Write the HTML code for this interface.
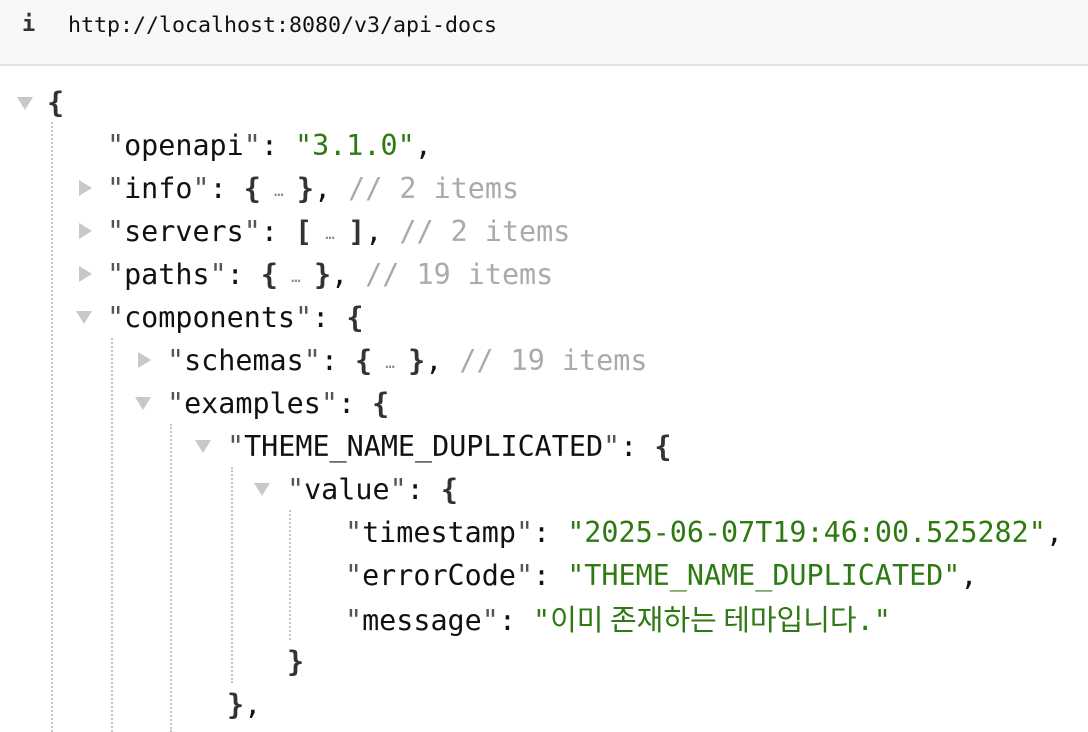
<!DOCTYPE html>
<html><head><meta charset="utf-8"><style>
html,body{margin:0;padding:0;background:#fff;width:1088px;height:732px;overflow:hidden}
.hdr{position:absolute;left:0;top:0;width:1088px;height:64px;background:#f8f8f8;border-bottom:2px solid #e2e2e2}
.hdr .i{position:absolute;left:22px;top:12px;font:bold 22px "DejaVu Sans Mono",monospace;color:#333}
.hdr .u{position:absolute;left:68px;top:13px;font:21.6px "DejaVu Sans Mono","Liberation Mono",monospace;color:#111}
.l{position:absolute;white-space:pre;font:28.4px/43px "DejaVu Sans Mono","Liberation Mono",monospace;color:#111}
.q{color:#555}
.s{color:#2e7a12}
.b{color:#333;font-weight:bold}
.c{color:#aaa}
.e{color:#888;font-size:16px;display:inline-block;width:36px;text-align:center;vertical-align:2px}
.k{font-family:"Noto Sans CJK KR","NanumGothic",sans-serif;font-size:29px}
.t{position:absolute;width:0;height:0}
.down{border-left:8px solid transparent;border-right:8px solid transparent;border-top:13px solid #c8c8c8}
.right{border-top:8px solid transparent;border-bottom:8px solid transparent;border-left:13px solid #c8c8c8}
.v{position:absolute;width:0;border-left:2px dotted #c4c4c4}
</style></head><body>
<div class="hdr"><span class="i">i</span><span class="u">http://localhost:8080/v3/api-docs</span></div>

<div class="t down" style="left:17px;top:97px"></div>
<div class="l" style="left:47px;top:81px"><span class="b">{</span></div>

<div class="v" style="left:51px;top:122px;height:610px"></div>
<div class="l" style="left:107px;top:124px"><span class="q">"</span>openapi<span class="q">"</span>: <span class="s">"3.1.0"</span>,</div>

<div class="t right" style="left:79px;top:180px"></div>
<div class="l" style="left:107px;top:167px"><span class="q">"</span>info<span class="q">"</span>: <span class="b">{</span><span class="e">…</span><span class="b">}</span>, <span class="c">// 2 items</span></div>

<div class="t right" style="left:79px;top:223px"></div>
<div class="l" style="left:107px;top:210px"><span class="q">"</span>servers<span class="q">"</span>: <span class="b">[</span><span class="e">…</span><span class="b">]</span>, <span class="c">// 2 items</span></div>

<div class="t right" style="left:79px;top:266px"></div>
<div class="l" style="left:107px;top:253px"><span class="q">"</span>paths<span class="q">"</span>: <span class="b">{</span><span class="e">…</span><span class="b">}</span>, <span class="c">// 19 items</span></div>

<div class="t down" style="left:76px;top:311px"></div>
<div class="l" style="left:107px;top:296px"><span class="q">"</span>components<span class="q">"</span>: <span class="b">{</span></div>

<div class="v" style="left:111px;top:338px;height:394px"></div>
<div class="t right" style="left:138px;top:352px"></div>
<div class="l" style="left:167px;top:339px"><span class="q">"</span>schemas<span class="q">"</span>: <span class="b">{</span><span class="e">…</span><span class="b">}</span>, <span class="c">// 19 items</span></div>

<div class="t down" style="left:135px;top:397px"></div>
<div class="l" style="left:167px;top:382px"><span class="q">"</span>examples<span class="q">"</span>: <span class="b">{</span></div>

<div class="v" style="left:170px;top:424px;height:308px"></div>
<div class="t down" style="left:195px;top:440px"></div>
<div class="l" style="left:227px;top:425px"><span class="q">"</span>THEME_NAME_DUPLICATED<span class="q">"</span>: <span class="b">{</span></div>

<div class="v" style="left:231px;top:467px;height:216px"></div>
<div class="t down" style="left:254px;top:483px"></div>
<div class="l" style="left:287px;top:468px"><span class="q">"</span>value<span class="q">"</span>: <span class="b">{</span></div>

<div class="v" style="left:289px;top:510px;height:130px"></div>
<div class="l" style="left:345px;top:511px"><span class="q">"</span>timestamp<span class="q">"</span>: <span class="s">"2025-06-07T19:46:00.525282"</span>,</div>
<div class="l" style="left:345px;top:554px"><span class="q">"</span>errorCode<span class="q">"</span>: <span class="s">"THEME_NAME_DUPLICATED"</span>,</div>
<div class="l" style="left:345px;top:597px"><span class="q">"</span>message<span class="q">"</span>: <span class="s">"<span class="k">이미 존재하는 테마입니다</span>."</span></div>
<div class="l" style="left:287px;top:640px"><span class="b">}</span></div>
<div class="l" style="left:227px;top:683px"><span class="b">}</span>,</div>
</body></html>
